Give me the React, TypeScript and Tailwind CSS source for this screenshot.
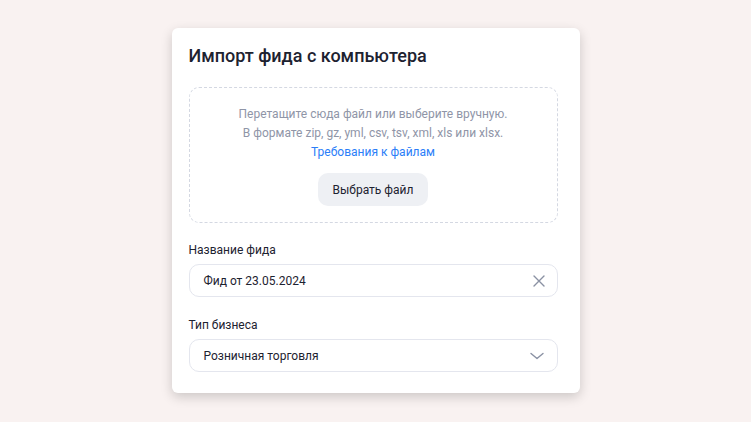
import React from 'react';

export default function App() {
  return (
    <div className="min-h-screen w-full bg-[#f9f2f1] flex justify-center pt-[28px]" style={{ fontFamily: 'Roboto, "Liberation Sans", sans-serif' }}>
      <div className="w-[408px] h-[365px] bg-white rounded-[6px] shadow-[0_4px_12px_rgba(0,0,0,0.18)] pl-[17px] pr-[22px] pt-[16px]">
        <h1 className="text-[18px] leading-[24px] text-[#1d2230] font-medium">Импорт фида с компьютера</h1>

        <div className="mt-[19px] h-[136px] border border-dashed border-[#d4d8e2] rounded-[10px] flex flex-col items-center pt-[17px]">
          <p className="text-[12px] leading-[19px] text-[#8f95a7]">Перетащите сюда файл или выберите вручную.</p>
          <p className="text-[12px] leading-[19px] text-[#8f95a7]">В формате zip, gz, yml, csv, tsv, xml, xls или xlsx.</p>
          <a className="text-[12px] leading-[19px] text-[#2b7ef8]">Требования к файлам</a>
          <button className="mt-[11px] h-[33px] w-[110px] rounded-[10px] bg-[#eef0f4] text-[12px] text-[#1d2230]">Выбрать файл</button>
        </div>

        <div className="mt-[18px] text-[12px] leading-[18px] text-[#1d2230]">Название фида</div>
        <div className="mt-[5px] h-[33px] border border-[#e4e6ee] rounded-[10px] flex items-center justify-between pl-[14px] pr-[10px]">
          <span className="text-[12px] text-[#1d2230]">Фид от 23.05.2024</span>
          <svg width="16" height="16" viewBox="0 0 16 16" fill="none" stroke="#8a91a3" strokeWidth="1.4" strokeLinecap="round">
            <path d="M3 3l10 10M13 3L3 13" />
          </svg>
        </div>

        <div className="mt-[19px] text-[12px] leading-[18px] text-[#1d2230]">Тип бизнеса</div>
        <div className="mt-[5px] h-[33px] border border-[#e4e6ee] rounded-[10px] flex items-center justify-between pl-[14px] pr-[12px]">
          <span className="text-[12px] text-[#1d2230]">Розничная торговля</span>
          <svg width="16" height="16" viewBox="0 0 16 16" fill="none" stroke="#8a91a3" strokeWidth="1.4" strokeLinecap="round" strokeLinejoin="round">
            <path d="M2 5.5l6 5 6-5" />
          </svg>
        </div>
      </div>
    </div>
  );
}
